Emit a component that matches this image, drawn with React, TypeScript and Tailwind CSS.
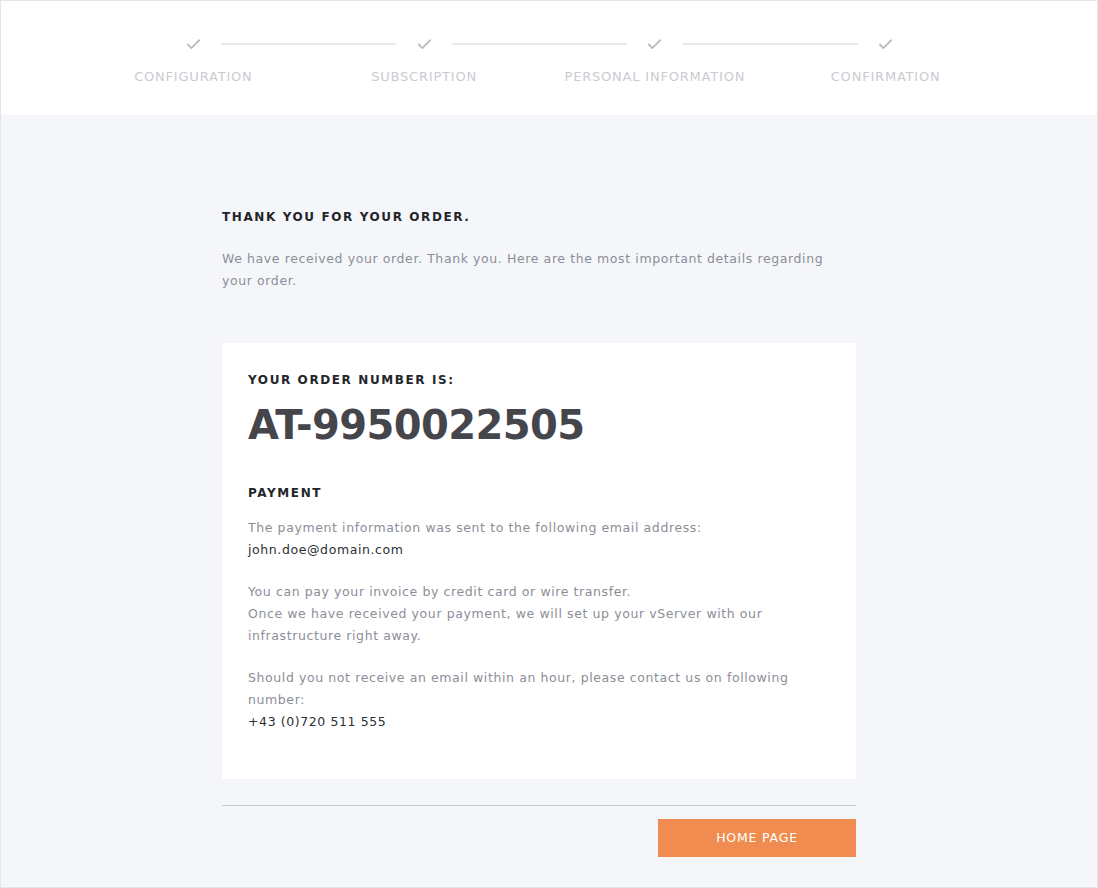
import { Check } from 'lucide-react';

const steps = ['Configuration', 'Subscription', 'Personal Information', 'Confirmation'];

function Stepper() {
  return (
    <div className="flex w-[923px] ml-[77px] pt-[33px]">
      {steps.map((label, i) => (
        <div key={label} className="flex-1 flex flex-col items-center relative">
          <div className="h-[20px] flex items-center">
            <Check className="w-[17px] h-[17px] text-[#b8bbc2]" strokeWidth={2.5} />
          </div>
          {i < steps.length - 1 && (
            <div className="absolute top-[9px] left-[calc(50%+28px)] w-[175px] h-[2px] bg-[#e8e9ec]" />
          )}
          <div className="mt-[13px] text-[13px] uppercase text-[#c9cbd1] tracking-[0.8px]">{label}</div>
        </div>
      ))}
    </div>
  );
}

export default function App() {
  return (
    <div
      className="min-h-screen h-[888px] bg-[#f5f6fa] border border-[#e4e5e8] flex flex-col"
      style={{ fontFamily: '"DejaVu Sans", "Open Sans", sans-serif' }}
    >
      <header className="bg-white h-[114px] shrink-0">
        <Stepper />
      </header>

      <main className="w-[634px] ml-[221px] pt-[92px]">
        <h1 className="text-[12px] font-bold uppercase tracking-[1.6px] text-[#24252a] leading-[20px]">
          Thank you for your order.
        </h1>
        <p className="mt-[21px] text-[12.5px] leading-[22px] text-[#8b8e97] tracking-[0.6px]">
          We have received your order. Thank you. Here are the most important details regarding
          <br />
          your order.
        </p>

        <section className="mt-[51px] bg-white px-[26px] pt-[27px] pb-[46px]">
          <h2 className="text-[12px] font-bold uppercase tracking-[1.6px] text-[#24252a] leading-[20px]">
            Your order number is:
          </h2>
          <div className="mt-[10px] text-[40px] font-bold leading-[50px] text-[#45464c] tracking-[-0.6px]">
            AT-9950022505
          </div>

          <h3 className="mt-[33px] text-[12px] font-bold uppercase tracking-[1.6px] text-[#24252a] leading-[20px]">
            Payment
          </h3>
          <div className="mt-[14px] text-[12.5px] leading-[22px] text-[#8b8e97] tracking-[0.6px]">
            <p>
              The payment information was sent to the following email address:
              <br />
              <span className="text-[#2e2f33]">john.doe@domain.com</span>
            </p>
            <p className="mt-[20px]">
              You can pay your invoice by credit card or wire transfer.
              <br />
              Once we have received your payment, we will set up your vServer with our
              <br />
              infrastructure right away.
            </p>
            <p className="mt-[20px]">
              Should you not receive an email within an hour, please contact us on following
              <br />
              number:
              <br />
              <span className="text-[#2e2f33]">+43 (0)720 511 555</span>
            </p>
          </div>
        </section>

        <div className="mt-[26px] border-t border-[#c9cacf] pt-[13px] flex justify-end">
          <button className="w-[198px] h-[38px] bg-[#f08c4f] text-white text-[12.5px] uppercase tracking-[0.8px]">
            Home page
          </button>
        </div>
      </main>
    </div>
  );
}
